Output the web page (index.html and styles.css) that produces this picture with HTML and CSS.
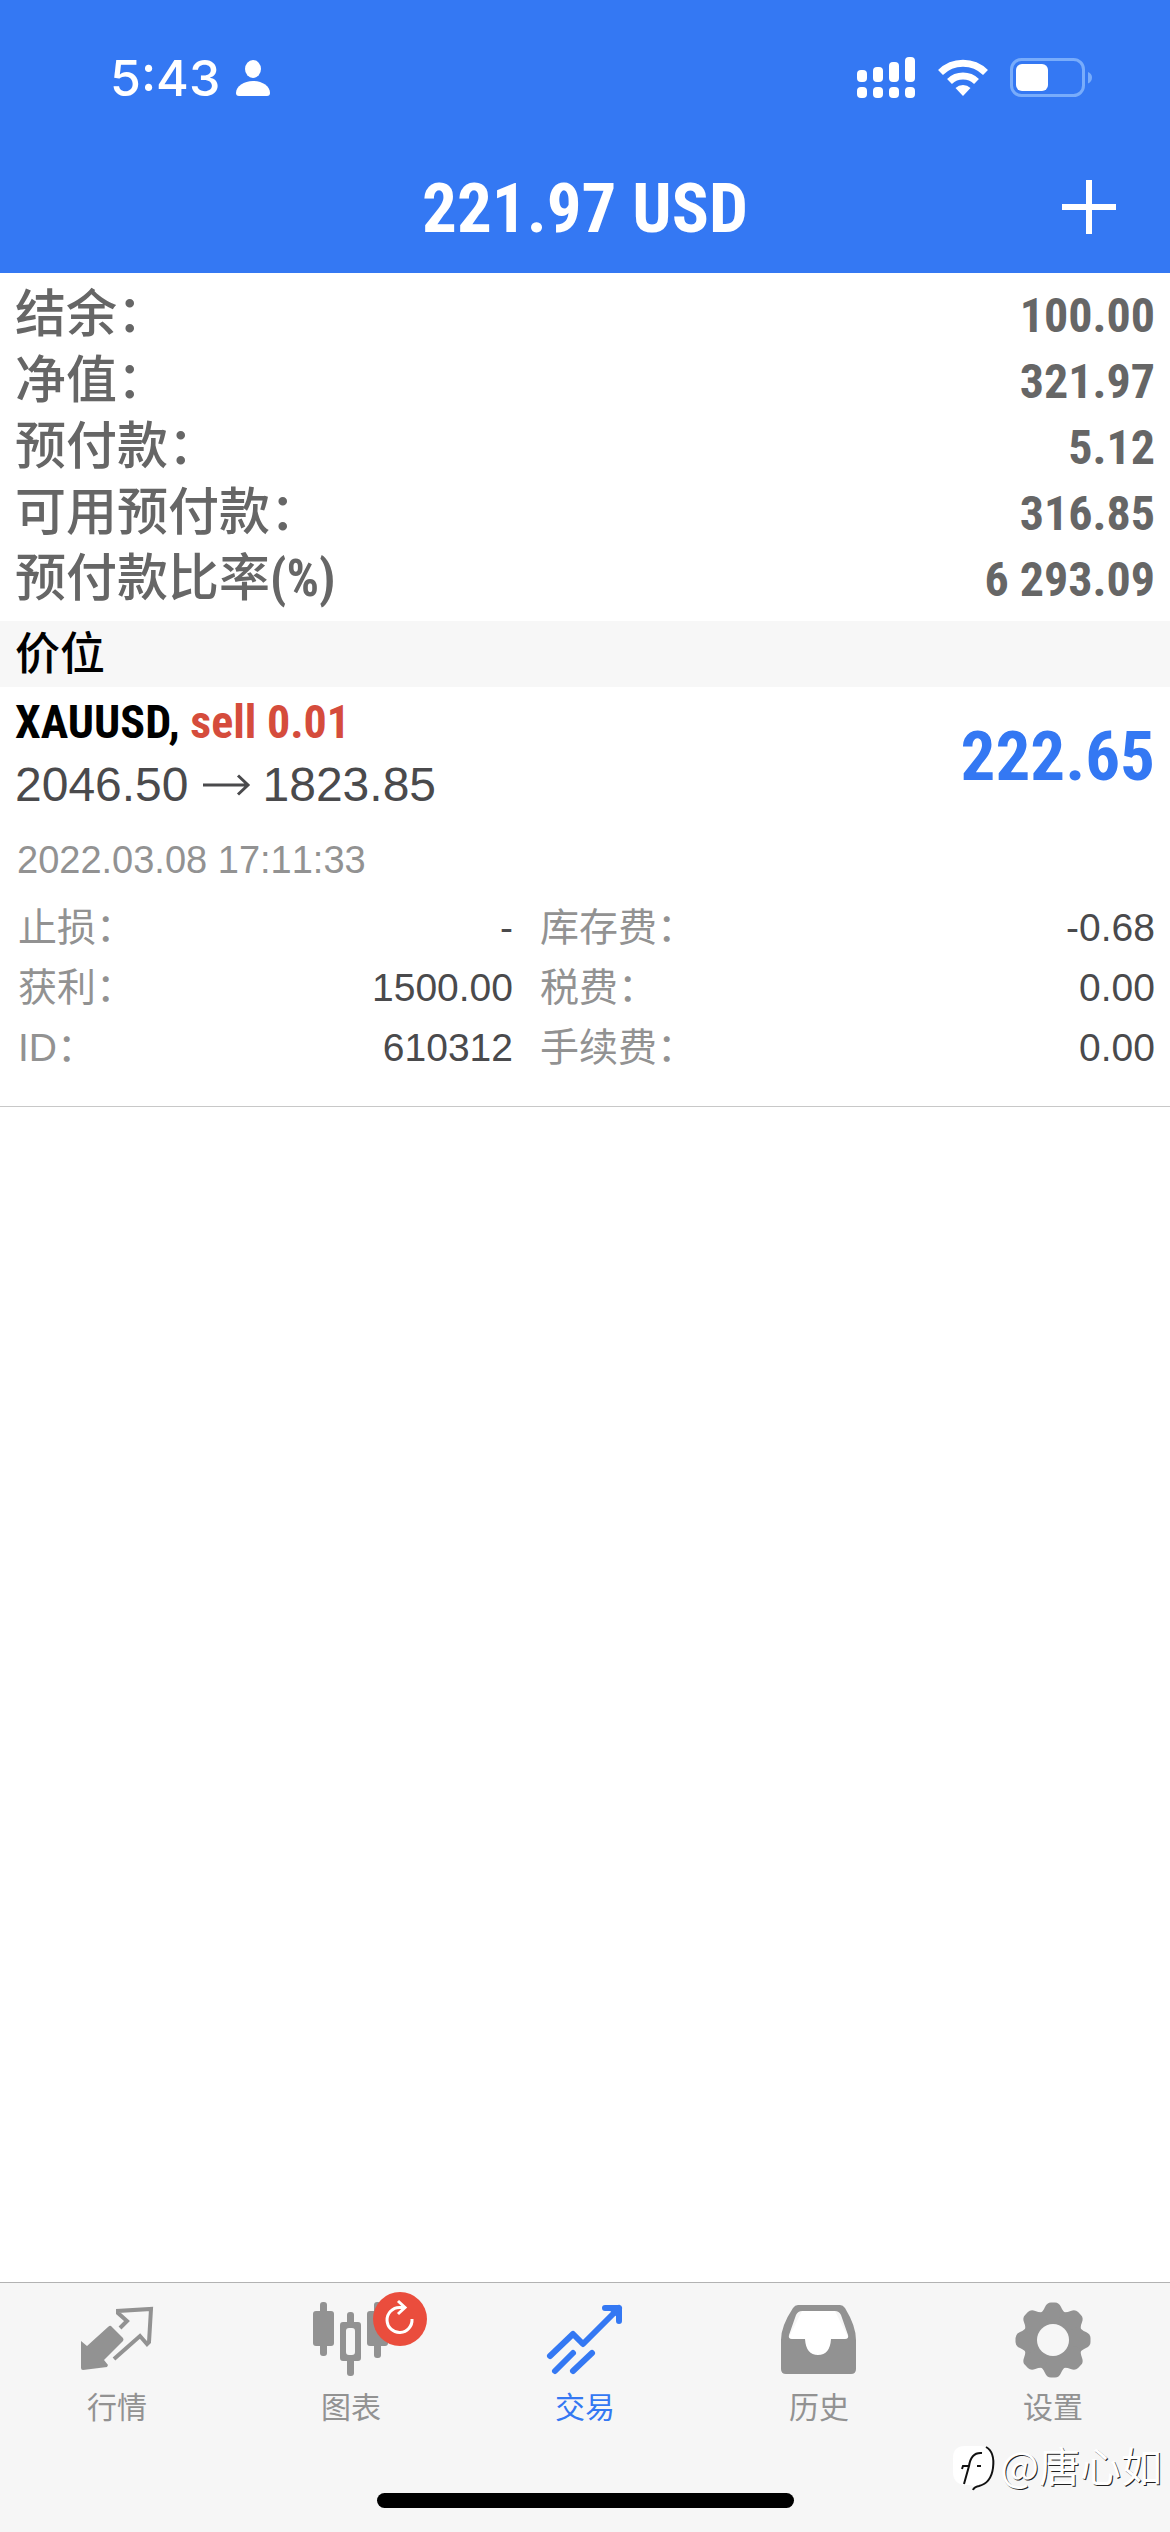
FILE: index.html
```html
<!DOCTYPE html>
<html lang="zh-CN">
<head>
<meta charset="utf-8">
<meta name="viewport" content="width=device-width, initial-scale=1">
<title>交易</title>
<link rel="stylesheet" href="styles.css">
</head>
<body>
<div class="app">
  <header class="header">
    <div class="status">
      <div class="status-left">
        <span class="clock">5:43</span>
        <svg class="person" width="34" height="36" viewBox="0 0 34 36" fill="#fff"><ellipse cx="17" cy="9" rx="8" ry="9"/><path d="M3 36Q0 36 0 33C0 26 8 21 17 21S34 26 34 33Q34 36 31 36Z"/></svg>
      </div>
      <div class="status-right">
        <svg width="60" height="42" viewBox="0 0 60 42" fill="#fff"><rect x="1" y="13" width="10" height="12" rx="4"/><rect x="17" y="10" width="10" height="15" rx="4"/><rect x="33" y="5" width="10" height="20" rx="4"/><rect x="49" y="0" width="10" height="25" rx="4"/><rect x="1" y="30" width="10" height="11" rx="4"/><rect x="17" y="30" width="10" height="11" rx="4"/><rect x="33" y="30" width="10" height="11" rx="4"/><rect x="49" y="30" width="10" height="11" rx="4"/></svg>
        <svg width="50" height="38" viewBox="0 0 50 38"><g fill="none" stroke="#fff" stroke-width="7"><path d="M2.500 13.500A32 32 0 0 1 47.500 13.500"/><path d="M11.500 22.500A19.500 19.500 0 0 1 38.500 22.500"/></g><path d="M17.500 29A11 11 0 0 1 32.500 29L25 37Z" fill="#fff"/></svg>
        <svg width="82" height="40" viewBox="0 0 82 40"><rect x="1.500" y="1.500" width="72" height="36" rx="10" fill="none" stroke="#78acfb" stroke-width="3"/><rect x="6" y="6" width="32" height="27" rx="6" fill="#fff"/><path d="M78 14Q82 15.500 82 19.500T78 25.500Z" fill="#78acfb"/></svg>
      </div>
    </div>
    <div class="title-bar">
      <h1 class="title">221.97 USD</h1>
      <button class="add" type="button" aria-label="新订单"><svg width="54" height="54" viewBox="0 0 54 54" stroke="#fff" stroke-width="6"><path d="M27 0V54M0 27H54"/></svg></button>
    </div>
  </header>

  <main class="content">
    <dl class="summary">
      <div class="summary-row"><dt>结余：</dt><dd>100.00</dd></div>
      <div class="summary-row"><dt>净值：</dt><dd>321.97</dd></div>
      <div class="summary-row"><dt>预付款：</dt><dd>5.12</dd></div>
      <div class="summary-row"><dt>可用预付款：</dt><dd>316.85</dd></div>
      <div class="summary-row"><dt>预付款比率<span class="unit">(%)</span></dt><dd>6 293.09</dd></div>
    </dl>
    <h2 class="section">价位</h2>
    <article class="position">
      <div class="position-head">
        <div>
          <div class="symbol">XAUUSD, <span class="side">sell 0.01</span></div>
          <div class="prices"><span>2046.50</span><svg width="46" height="22" viewBox="0 0 46 22" fill="none" stroke="#4a4a4c" stroke-width="3"><path d="M0 11H44M35 1.500L45 11L35 20.500"/></svg><span>1823.85</span></div>
        </div>
        <div class="profit">222.65</div>
      </div>
      <time class="time">2022.03.08 17:11:33</time>
      <dl class="details">
        <div class="detail"><dt>止损：</dt><dd>-</dd></div>
        <div class="detail"><dt>库存费：</dt><dd>-0.68</dd></div>
        <div class="detail"><dt>获利：</dt><dd>1500.00</dd></div>
        <div class="detail"><dt>税费：</dt><dd>0.00</dd></div>
        <div class="detail"><dt>ID：</dt><dd>610312</dd></div>
        <div class="detail"><dt>手续费：</dt><dd>0.00</dd></div>
      </dl>
    </article>
  </main>

  <footer class="footer">
    <nav class="tabs">
      <a class="tab" href="#quotes"><svg class="icon" width="76" height="76" viewBox="0 0 76 76"><path d="M32 22L44 34Q45 36 44 37L25 56L29 61L28 63L4 66Q2 66 2 64V37L8 42L29 23Q31 21 32 22Z" fill="currentColor"/><path d="M41 24L48 17L39 9V7L72 5L70 38L68 40L61 32L35 55" fill="none" stroke="currentColor" stroke-width="4"/></svg><span>行情</span></a>
      <a class="tab" href="#charts"><span class="badge-wrap"><svg class="icon" width="76" height="76" viewBox="0 0 76 76" fill="currentColor"><rect x="7" y="-2" width="7" height="54" rx="3"/><rect x="0" y="7" width="21" height="35" rx="3"/><rect x="34" y="8" width="7" height="14" rx="3"/><rect x="34" y="54" width="7" height="18" rx="3"/><path fill-rule="evenodd" d="M30 18H45Q48 18 48 21V54Q48 57 45 57H30Q27 57 27 54V21Q27 18 30 18ZM36 24Q33 24 33 27V48Q33 51 36 51H39Q42 51 42 48V27Q42 24 39 24Z"/><rect x="61" y="-2" width="7" height="56" rx="3"/><rect x="54" y="7" width="21" height="35" rx="3"/></svg><svg class="badge" width="54" height="54" viewBox="0 0 54 54"><circle cx="27" cy="27" r="27" fill="#ea4d3d"/><path d="M39 27A12.500 12.500 0 1 1 26.500 15.500H32M25 9L32 15.500L25 22" fill="none" stroke="#fff" stroke-width="3"/></svg></span><span>图表</span></a>
      <a class="tab active" href="#trade" aria-current="page"><svg class="icon" width="76" height="76" viewBox="0 0 76 76" fill="none" stroke="currentColor" stroke-width="6" stroke-linecap="round" stroke-linejoin="round"><path d="M3 52L26 30L36 40L72 4M58 4H72V17M8 67L26 49M26 67L45 49"/><path d="M60 4H72V15Z" fill="currentColor" stroke="none"/></svg><span>交易</span></a>
      <a class="tab" href="#history"><svg class="icon" width="76" height="76" viewBox="0 0 76 76"><path d="M21 7H54L68 35H50Q50 51 37 51T24 35H7Z" fill="#fff"/><path fill="currentColor" fill-rule="evenodd" d="M17 1H59Q62 1 64 4Q75 22 75 36V65Q75 70 70 70H5Q0 70 0 65V36Q0 22 12 4Q14 1 17 1ZM21 7Q17 7 15 11L8 31Q7 35 11 35H24Q25 51 37 51T50 35H64Q68 35 67 31L60 11Q58 7 54 7Z"/></svg><span>历史</span></a>
      <a class="tab" href="#settings"><svg class="icon" width="76" height="76" viewBox="-38 -36 76 76" fill="currentColor"><defs><path id="tooth" d="M-14-26Q-10-28-8-33Q-6-37.500-2-37.500H2Q6-37.500 8-33Q10-28 14-26L0 0Z"/></defs><mask id="hole"><rect x="-38" y="-38" width="76" height="76" fill="#fff"/><circle r="16" fill="#000"/></mask><g mask="url(#hole)"><circle r="29"/><use href="#tooth"/><use href="#tooth" transform="rotate(45)"/><use href="#tooth" transform="rotate(90)"/><use href="#tooth" transform="rotate(135)"/><use href="#tooth" transform="rotate(180)"/><use href="#tooth" transform="rotate(225)"/><use href="#tooth" transform="rotate(270)"/><use href="#tooth" transform="rotate(315)"/></g></svg><span>设置</span></a>
    </nav>
    <div class="home-indicator"></div>
    <div class="watermark">
      <svg width="44" height="48" viewBox="0 0 44 48"><path d="M12 0H28Q42 2 41 20Q40 36 22 42L18 39H12Q0 38 0 26V12Q0 0 12 0Z" fill="#fff"/><path d="M33 1Q42 6 40 22Q38 37 26 40Q21 41 20 44M29 7Q18 6 16 20L11 38M9 23L10 20H16M24 20H28" fill="none" stroke="#111" stroke-width="2"/></svg>
      <span>@唐心如</span>
    </div>
  </footer>
</div>
</body>
</html>
```
FILE: styles.css
```css
* { box-sizing: border-box; }

body {
  margin: 0;
  background: #fff;
  font-family: "Liberation Sans", "Noto Sans CJK SC", sans-serif;
}

h1, h2, dl, dd { margin: 0; }

svg { display: block; overflow: visible; }

.app {
  min-height: 100vh;
  display: flex;
  flex-direction: column;
}

.header {
  background: #3478f3;
  color: #fff;
  height: 273px;
}

.status {
  height: 156px;
  padding: 0 78px 0 110px;
  display: flex;
  align-items: center;
  justify-content: space-between;
}

.status-left, .status-right { display: flex; align-items: center; }
.status-left { gap: 16px; }
.status-right { gap: 22px; }

.clock {
  font-family: Inter, sans-serif;
  font-size: 50px;
  font-weight: 500;
}

.title-bar {
  height: 102px;
  padding: 0 54px;
  display: grid;
  grid-template-columns: 54px 1fr 54px;
  align-items: center;
}

.title {
  grid-column: 2;
  text-align: center;
}

.title, .profit {
  padding-top: 3px;
  font: bold 69px/80px "Roboto Condensed", "Liberation Sans", sans-serif;
}

.add {
  border: 0;
  padding: 0;
  background: none;
}

.content { flex: 1; }

.summary { padding: 4px 15px 14px; }

.summary-row {
  height: 66px;
  display: flex;
  align-items: baseline;
  justify-content: space-between;
  color: #666;
  font: bold 48px/66px "Roboto Condensed", "Liberation Sans", sans-serif;
}

.summary-row dt {
  font-family: "Noto Sans CJK SC", sans-serif;
  font-size: 51px;
  font-weight: 500;
}

.unit {
  font: bold 51px/48px "Roboto Condensed", "Liberation Sans", sans-serif;
}

.section {
  padding: 2px 15px 0;
  background: #f7f7f7;
  font-size: 45px;
  font-weight: 500;
  line-height: 64px;
}

.position {
  padding: 0 15px 28px;
  border-bottom: 1px solid #c8c8c8;
}

.position-head {
  display: flex;
  justify-content: space-between;
  align-items: center;
  padding-top: 5px;
}

.symbol {
  font: bold 46px/60px "Roboto Condensed", "Liberation Sans", sans-serif;
}

.side { color: #d54c3c; }

.prices {
  display: flex;
  align-items: center;
  gap: 14px;
  color: #4a4a4c;
  font-size: 48px;
  line-height: 66px;
}

.profit { color: #3478f3; }

.time {
  display: block;
  padding: 12px 2px 8px;
  color: #929292;
  font-size: 38px;
  font-kerning: none;
  line-height: 60px;
}

.details {
  padding-left: 3px;
  display: grid;
  grid-template-columns: 495fr 615fr;
  column-gap: 27px;
}

.detail {
  display: flex;
  justify-content: space-between;
  font-size: 39px;
  line-height: 60px;
}

.detail dt { color: #929292; }
.detail dd { color: #4a4a4c; }

.footer {
  position: relative;
  height: 250px;
  border-top: 1px solid #b2b2b2;
  background: #f6f6f6;
  display: flex;
  flex-direction: column;
  align-items: center;
  justify-content: space-between;
  padding-bottom: 24px;
}

.tabs {
  width: 100%;
  display: grid;
  grid-template-columns: repeat(5, 1fr);
}

.tab {
  display: flex;
  flex-direction: column;
  align-items: center;
  gap: 8px;
  padding-top: 21px;
  color: #929292;
  font-size: 30px;
  line-height: 40px;
  text-decoration: none;
}

.active { color: #3478f3; }

.badge-wrap { position: relative; }

.badge {
  position: absolute;
  left: 60px;
  top: -12px;
}

.home-indicator {
  width: 417px;
  height: 15px;
  border-radius: 8px;
  background: #000;
}

.watermark {
  position: absolute;
  right: 8px;
  bottom: 38px;
  display: flex;
  align-items: flex-start;
  gap: 3px;
  color: #fff;
  font-family: "Noto Sans CJK SC", sans-serif;
  font-size: 41px;
  line-height: 36px;
  text-shadow: 1px 1px 0 #222;
}
```
